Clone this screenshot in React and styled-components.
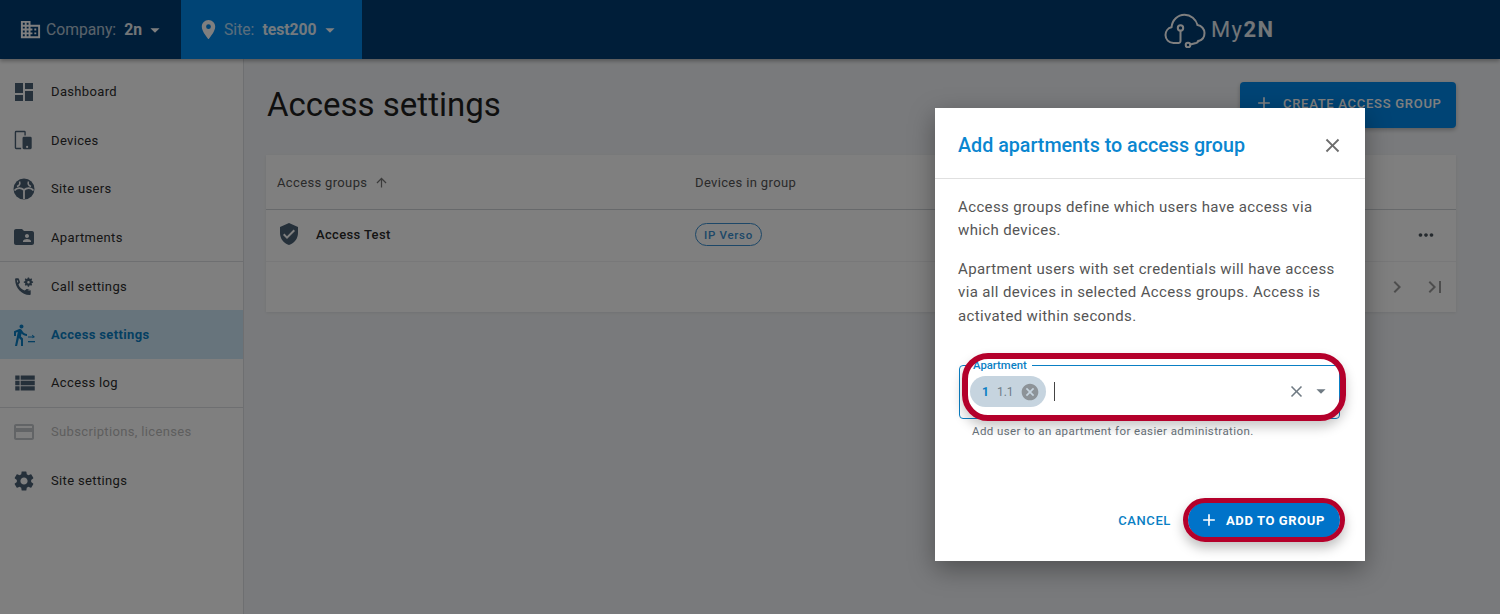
import React from 'react'
import styled, { createGlobalStyle } from 'styled-components'
import {
  MdAdd,
  MdArrowDropDown,
  MdArrowUpward,
  MdBusiness,
  MdCancel,
  MdChevronRight,
  MdClose,
  MdCreditCard,
  MdDashboard,
  MdDirectionsWalk,
  MdFolderShared,
  MdLastPage,
  MdLocationOn,
  MdMoreHoriz,
  MdSettings,
  MdVerifiedUser,
  MdViewList,
} from 'react-icons/md'

const blue = '#0a86d0'

const GlobalStyle = createGlobalStyle`
  html, body {
    margin: 0;
    padding: 0;
    height: 100%;
    overflow: hidden;
  }
  body {
    font-family: Roboto, "Liberation Sans", sans-serif;
    color: #212121;
  }
  * { box-sizing: border-box; }
`

// the icons the packages don't have
const DevicesIcon = props => (
  <svg viewBox="0 0 24 24" width="22" height="22" fill="currentColor" {...props}>
    <path d="M4.500 2h9A1.500 1.500 0 0 1 15 3.500V7h-1.500V3.500h-9v17H10V22H4.500A1.500 1.500 0 0 1 3 20.500v-17A1.500 1.500 0 0 1 4.500 2z" />
    <path d="M13 8.500h7a1.500 1.500 0 0 1 1.500 1.500v10.500A1.500 1.500 0 0 1 20 22h-7a1.500 1.500 0 0 1-1.500-1.500V10A1.500 1.500 0 0 1 13 8.500zm3.500 9.800a1.200 1.200 0 1 0 0 2.400 1.200 1.200 0 0 0 0-2.400z" fillRule="evenodd" />
  </svg>
)

const UsersIcon = props => (
  <svg viewBox="0 0 24 24" width="24" height="24" {...props}>
    <circle cx="12" cy="12" r="10.500" fill="currentColor" />
    <path d="M2.500 13.500C5 10.500 9 10.500 12 13c3-2.500 7-2.500 9.500.5M12 13v9" fill="none" stroke="#fff" strokeWidth="1.800" />
    <path d="M7.500 4.500c1 2.500 0 4-2.500 5M16.500 4.500c-1 2.500 0 4 2.500 5" fill="none" stroke="#fff" strokeWidth="1.500" />
  </svg>
)

const CallIcon = props => (
  <svg viewBox="0 0 24 24" width="23" height="23" fill="currentColor" {...props}>
    <path d="M6.300 3.500c.5 0 .9.300 1 .7l1 3c.1.400 0 .8-.3 1.100L6.700 9.800c1 2.800 3.500 5.200 6.500 6.500l1.500-1.300c.3-.3.700-.4 1.100-.3l3 1c.4.100.7.500.7 1v3.100c0 .6-.5 1.100-1.100 1.100C10 20.400 3.600 14 3.200 4.600c0-.6.500-1.100 1.100-1.100zM5 5.500c.2 1 .4 1.800.8 2.600l.7-.7-.6-1.900zm10.800 10.600.1.100c.9.300 1.800.5 2.600.6v-.9z" fillRule="evenodd" />
    <path d="M17.800 2.500l.3 1.200.9.400 1.100-.6.900.9-.6 1.100.4.900 1.200.3v1.300l-1.200.3-.4.9.6 1.100-.9.900-1.100-.6-.9.400-.3 1.200h-1.300l-.3-1.200-.9-.4-1.100.6-.9-.9.6-1.100-.4-.9-1.200-.3V6.700l1.200-.3.4-.9-.6-1.100.9-.9 1.100.6.9-.4.3-1.200zm-.6 3.700a1.300 1.300 0 1 0 0 2.600 1.300 1.300 0 0 0 0-2.600z" fillRule="evenodd" />
  </svg>
)

const AccessIcon = props => (
  <svg viewBox="0 0 24 24" width="24" height="24" fill="currentColor" {...props}>
    <g transform="translate(-4 0)">
      <MdDirectionsWalk size={24} />
    </g>
    <path d="M16 13.500h5l-1.200-1.200.7-.5L23 14l-2.500 1.200v-.7H16z" />
    <path d="M16 18h7v1.300h-7z" />
  </svg>
)

const CloudLogo = () => (
  <svg viewBox="0 0 42 36" width="42" height="36" fill="none" stroke="currentColor" strokeWidth="2" strokeLinecap="round">
    <path d="M14 31H9.500C4.800 31 1.500 27.300 1.500 23c0-3.700 2.500-6.900 6-7.700C8.300 8 13.800 2.800 20.500 2.800c6.300 0 11.500 4.300 13 10.200 4 .6 7 4 7 8.100 0 3.800-2.400 7-5.800 7.900" />
    <circle cx="16.500" cy="16" r="2.700" />
    <path d="M16.500 18.700V29c0 1.300-1 2.200-2.500 2" />
    <circle cx="24" cy="33" r="2.300" />
    <path d="M26.300 32.500l5.700-1.500c1.700-.5 2.200-1.500 2.200-2.300" />
  </svg>
)

const navItems = [
  { label: 'Dashboard', icon: <MdDashboard size={24} /> },
  { label: 'Devices', icon: <DevicesIcon /> },
  { label: 'Site users', icon: <UsersIcon /> },
  { label: 'Apartments', icon: <MdFolderShared size={24} />, divider: true },
  { label: 'Call settings', icon: <CallIcon /> },
  { label: 'Access settings', icon: <AccessIcon />, active: true },
  { label: 'Access log', icon: <MdViewList size={26} />, divider: true },
  { label: 'Subscriptions, licenses', icon: <MdCreditCard size={24} />, disabled: true },
  { label: 'Site settings', icon: <MdSettings size={24} /> },
]

export default function App() {
  return (
    <Page>
      <GlobalStyle />
      <TopBar>
        <Switcher>
          <MdBusiness size={23} />
          <SwitchLabel>Company:</SwitchLabel>
          <SwitchValue>2n</SwitchValue>
          <MdArrowDropDown size={22} />
        </Switcher>
        <Switcher selected>
          <MdLocationOn size={23} />
          <SwitchLabel>Site:</SwitchLabel>
          <SwitchValue>test200</SwitchValue>
          <MdArrowDropDown size={22} />
        </Switcher>
        <Logo>
          <CloudLogo />
          <LogoText>
            My<b>2N</b>
          </LogoText>
        </Logo>
      </TopBar>
      <Body>
        <Sidebar>
          {navItems.map(item => (
            <NavItem
              key={item.label}
              $active={item.active}
              $disabled={item.disabled}
              $divider={item.divider}
            >
              <NavIcon>{item.icon}</NavIcon>
              {item.label}
            </NavItem>
          ))}
        </Sidebar>
        <Main>
          <TitleRow>
            <Title>Access settings</Title>
            <CreateButton>
              <MdAdd size={20} />
              CREATE ACCESS GROUP
            </CreateButton>
          </TitleRow>
          <Table>
            <HeadRow>
              <span>
                Access groups <MdArrowUpward size={15} />
              </span>
              <span>Devices in group</span>
            </HeadRow>
            <DataRow>
              <GroupName>
                <MdVerifiedUser size={24} />
                Access Test
              </GroupName>
              <span>
                <DeviceChip>IP Verso</DeviceChip>
              </span>
              <MoreCell>
                <MdMoreHoriz size={22} />
              </MoreCell>
            </DataRow>
            <Pagination>
              <MdChevronRight size={24} />
              <MdLastPage size={24} />
            </Pagination>
          </Table>
        </Main>
      </Body>
      <Backdrop />
      <Dialog>
        <DialogHead>
          <DialogTitle>Add apartments to access group</DialogTitle>
          <CloseBtn>
            <MdClose size={23} />
          </CloseBtn>
        </DialogHead>
        <DialogBody>
          <Para>Access groups define which users have access via which devices.</Para>
          <Para>
            Apartment users with set credentials will have access via all devices in selected
            Access groups. Access is activated within seconds.
          </Para>
          <Field>
            <FieldLabel>Apartment</FieldLabel>
            <ValueChip>
              <b>1</b>
              <span>1.1</span>
              <MdCancel size={20} />
            </ValueChip>
            <Caret />
            <FieldIcons>
              <MdClose size={19} />
              <MdArrowDropDown size={22} />
            </FieldIcons>
            <FieldCallout />
          </Field>
          <Helper>Add user to an apartment for easier administration.</Helper>
        </DialogBody>
        <DialogActions>
          <CancelBtn>CANCEL</CancelBtn>
          <AddBtn>
            <MdAdd size={20} />
            ADD TO GROUP
            <ButtonCallout />
          </AddBtn>
        </DialogActions>
      </Dialog>
    </Page>
  )
}

const Page = styled.div`
  position: relative;
  width: 1500px;
  height: 614px;
  overflow: hidden;
  display: flex;
  flex-direction: column;
  background: #f3f5f8;
`
const TopBar = styled.header`
  flex: 0 0 59px;
  display: flex;
  background: #003d73;
  color: #fff;
  box-shadow: 0 2px 4px rgba(0, 0, 0, 0.3);
  z-index: 1;
`
const Switcher = styled.div`
  width: 181px;
  display: flex;
  align-items: center;
  padding-left: ${props => (props.selected ? '16px' : '19px')};
  background: ${props => (props.selected ? '#0088ea' : 'transparent')};
  font-size: 15.7px;
  svg:last-child {
    margin-left: 2px;
  }
`
const SwitchLabel = styled.span`
  margin-left: 4px;
  opacity: 0.7;
`
const SwitchValue = styled.b`
  margin-left: 8px;
  font-weight: 700;
  opacity: 0.9;
`
const Logo = styled.div`
  margin-left: 802px;
  display: flex;
  align-items: center;
  gap: 5px;
`
const LogoText = styled.span`
  font-size: 22px;
  font-weight: 400;
  letter-spacing: 1.4px;
  opacity: 0.9;
  b {
    font-weight: 700;
  }
`
const Body = styled.div`
  flex: 1;
  display: flex;
  min-height: 0;
`
const Sidebar = styled.nav`
  flex: 0 0 244px;
  padding-top: 8.5px;
  background: #fff;
  border-right: 1px solid #dcdfe2;
`
const NavItem = styled.div`
  height: 48.6px;
  display: flex;
  align-items: center;
  font-size: 13px;
  letter-spacing: 0.35px;
  font-weight: ${props => (props.$active ? 700 : 400)};
  color: ${props => (props.$active ? '#0a7fc4' : props.$disabled ? '#bdbdbd' : '#2c2c2c')};
  background: ${props => (props.$active ? '#cfe9f9' : 'transparent')};
  border-bottom: ${props => (props.$divider ? '1px solid #dcdfe2' : '0')};
  svg {
    color: ${props => (props.$active ? '#0a7fc4' : props.$disabled ? '#c4c9cd' : '#4a6075')};
  }
`
const NavIcon = styled.span`
  flex: 0 0 51px;
  padding-left: 12px;
  display: flex;
  align-items: center;
`
const Main = styled.main`
  flex: 1;
  padding: 23px 44px 0 22px;
`
const TitleRow = styled.div`
  display: flex;
  align-items: flex-start;
  justify-content: space-between;
  height: 73px;
`
const Title = styled.h1`
  margin: 2px 0 0 1px;
  font-size: 33px;
  font-weight: 400;
  line-height: 42px;
  color: #1f1f1f;
`
const CreateButton = styled.button`
  width: 216px;
  height: 46px;
  display: flex;
  align-items: center;
  gap: 9px;
  padding: 0 0 4px 14px;
  border: 0;
  border-radius: 4px;
  background: #0088ea;
  color: #fff;
  font: 500 13px Roboto, sans-serif;
  letter-spacing: 0.72px;
  box-shadow: 0 2px 4px rgba(0, 0, 0, 0.25);
`
const Table = styled.section`
  height: 157px;
  background: #fff;
  box-shadow: 0 1px 3px rgba(0, 0, 0, 0.08);
`
const HeadRow = styled.div`
  height: 55px;
  display: grid;
  grid-template-columns: 418px 1fr;
  align-items: center;
  padding-left: 11px;
  font-size: 13px;
  letter-spacing: 0.35px;
  color: #555;
  border-bottom: 1px solid #cfd3d6;
  svg {
    margin-left: 3px;
    vertical-align: -3px;
    color: #777;
  }
`
const DataRow = styled.div`
  height: 52px;
  display: grid;
  grid-template-columns: 418px 1fr 60px;
  align-items: center;
  padding: 0 0 2px 11px;
  border-bottom: 1px solid #f0f1f2;
`
const GroupName = styled.div`
  display: flex;
  align-items: center;
  gap: 15px;
  font-size: 13px;
  font-weight: 500;
  letter-spacing: 0.35px;
  color: #2a2a2a;
  svg {
    color: #4a6075;
    margin-top: -2px;
  }
`
const DeviceChip = styled.span`
  display: inline-flex;
  align-items: center;
  height: 23px;
  padding: 0 8px;
  border: 1.5px solid #3a8fd0;
  border-radius: 12px;
  font-size: 11.5px;
  font-weight: 500;
  letter-spacing: 0.7px;
  color: #3a8fd0;
`
const MoreCell = styled.span`
  display: flex;
  padding-left: 19px;
  color: #4a545c;
`
const Pagination = styled.div`
  height: 50px;
  display: flex;
  align-items: center;
  justify-content: flex-end;
  gap: 14px;
  padding-right: 9px;
  color: #9a9a9a;
`
const Backdrop = styled.div`
  position: absolute;
  inset: 0;
  z-index: 2;
  background: rgba(0, 0, 0, 0.5);
`
const Dialog = styled.div`
  position: absolute;
  z-index: 3;
  left: 935px;
  top: 108px;
  width: 430px;
  height: 453px;
  display: flex;
  flex-direction: column;
  background: #fff;
  box-shadow: 0 8px 24px rgba(0, 0, 0, 0.35);
`
const DialogHead = styled.div`
  flex: 0 0 71px;
  display: flex;
  align-items: center;
  justify-content: space-between;
  padding: 4px 21px 0 23px;
  border-bottom: 1px solid #e0e0e0;
`
const DialogTitle = styled.h2`
  margin: 0;
  font-size: 19.7px;
  font-weight: 500;
  color: ${blue};
`
const CloseBtn = styled.span`
  display: flex;
  color: #6d6d6d;
`
const DialogBody = styled.div`
  flex: 1;
  padding: 16.8px 24px 0 23px;
`
const Para = styled.p`
  margin: 0 0 15px;
  font-size: 15px;
  line-height: 23.5px;
  letter-spacing: 0.37px;
  color: #555;
`
const Field = styled.div`
  position: relative;
  left: 1px;
  margin-top: 37px;
  width: 381px;
  height: 54px;
  display: flex;
  align-items: flex-start;
  padding: 10px 7px 0 10px;
  border: 1px solid #0a7fc4;
  border-radius: 4px;
`
const FieldLabel = styled.label`
  position: absolute;
  left: 10px;
  top: -7px;
  padding: 0 5px 0 3px;
  background: #fff;
  font-size: 11.3px;
  line-height: 13px;
  font-weight: 500;
  color: #0a7fc4;
`
const ValueChip = styled.div`
  height: 31px;
  width: 76px;
  display: flex;
  align-items: center;
  padding-left: 12px;
  border-radius: 16px;
  background: #c6d4df;
  font-size: 12px;
  b {
    font-weight: 700;
    color: #0a7fc4;
    margin-right: 8px;
  }
  span {
    color: #6f7d88;
    margin-right: 6px;
  }
  svg {
    color: #8d9398;
  }
`
const Caret = styled.span`
  width: 1px;
  height: 19px;
  margin: 6px 0 0 8px;
  background: #444;
`
const FieldIcons = styled.div`
  margin-left: auto;
  margin-top: 4px;
  display: flex;
  align-items: center;
  gap: 4px;
  color: #6f7a83;
`
const FieldCallout = styled.div`
  position: absolute;
  left: 2px;
  top: -13px;
  width: 384px;
  height: 68px;
  border: 6px solid #b4002b;
  border-radius: 26px;
  box-shadow: 0 6px 12px rgba(0, 0, 0, 0.22);
  pointer-events: none;
`
const Helper = styled.div`
  margin: 5px 0 0 14px;
  font-size: 11.5px;
  line-height: 14px;
  letter-spacing: 0.4px;
  color: #68727a;
`
const DialogActions = styled.div`
  flex: 0 0 auto;
  display: flex;
  align-items: center;
  justify-content: flex-end;
  gap: 17px;
  padding: 0 25px 23px 0;
`
const CancelBtn = styled.span`
  font-size: 13px;
  font-weight: 500;
  letter-spacing: 0.6px;
  color: #0a7fc4;
`
const AddBtn = styled.button`
  position: relative;
  width: 152px;
  height: 36px;
  display: flex;
  align-items: center;
  gap: 7px;
  padding: 0 0 0 11px;
  border: 0;
  border-radius: 18px;
  background: #0073c9;
  color: #fff;
  font: 700 13px Roboto, sans-serif;
  letter-spacing: 0.6px;
`
const ButtonCallout = styled.span`
  position: absolute;
  left: -5px;
  top: -4px;
  width: 162px;
  height: 44px;
  border: 5px solid #b4002b;
  border-radius: 22px;
  box-shadow: 0 6px 12px rgba(0, 0, 0, 0.25);
  pointer-events: none;
`
